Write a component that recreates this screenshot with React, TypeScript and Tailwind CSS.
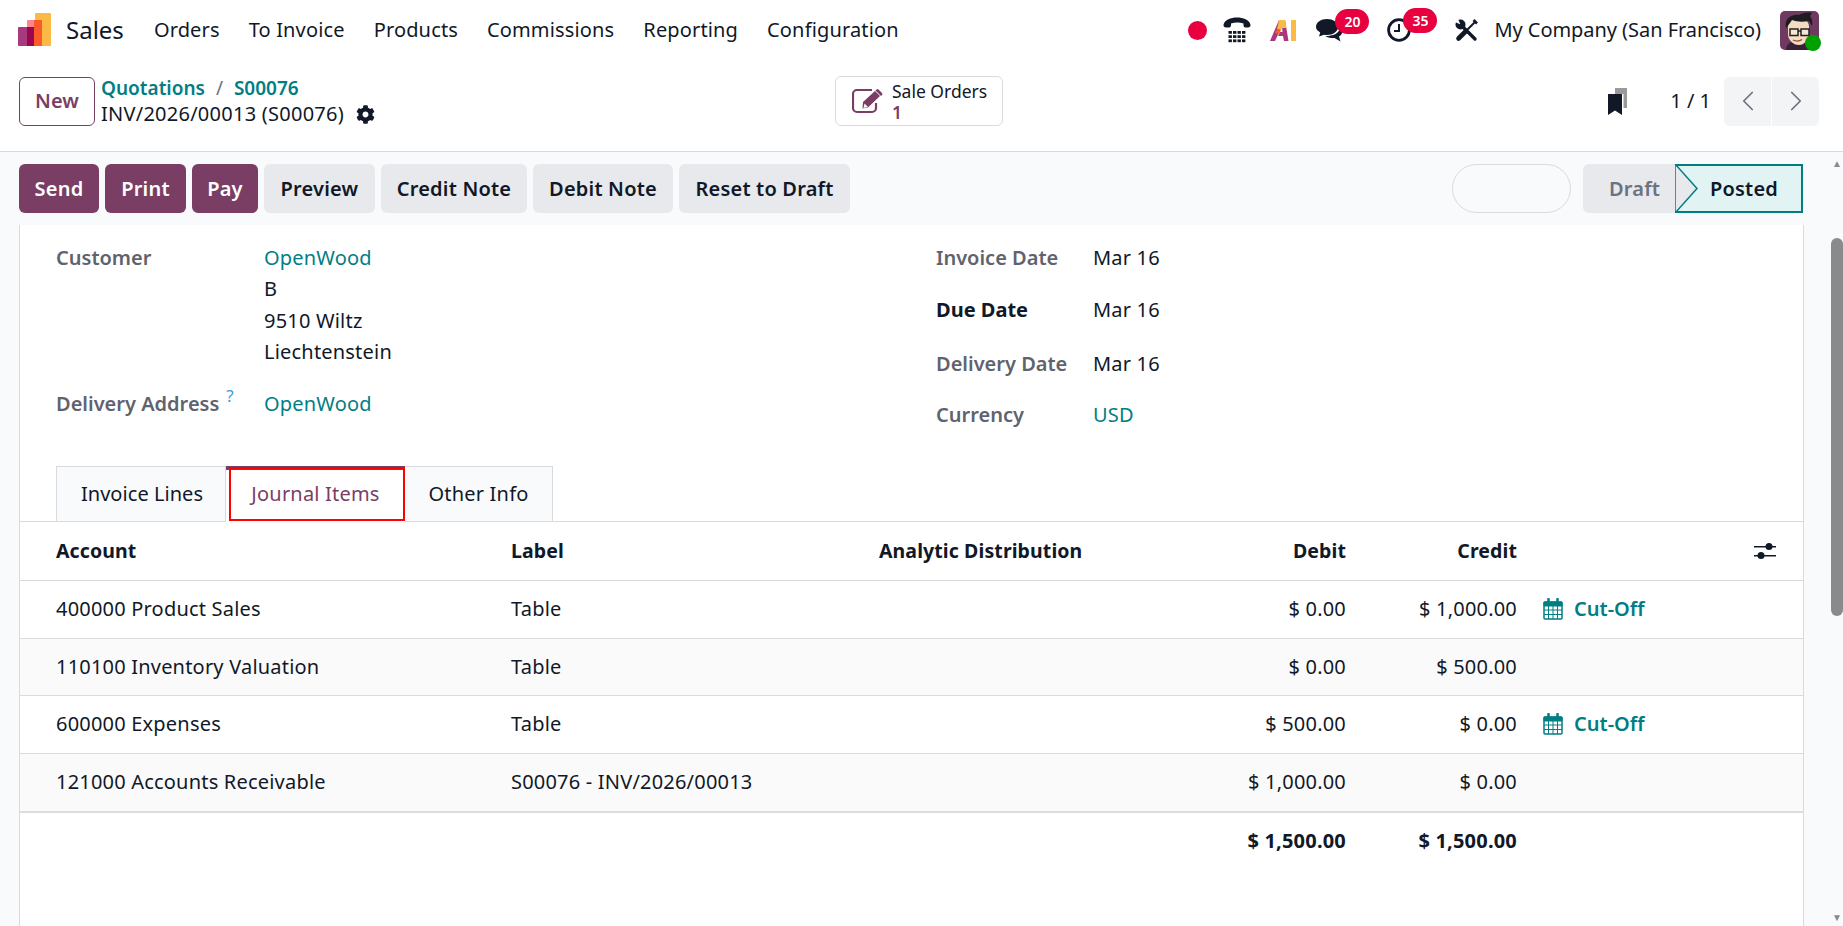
import React from "react";
import { FaCog } from "react-icons/fa";
import { ChevronLeft, ChevronRight } from "lucide-react";

const Logo = () => (
  <svg width="34" height="34" viewBox="0 0 34 34" className="shrink-0">
    <path d="M17 1a1 1 0 0 1 1-1h14a1 1 0 0 1 1 1v31a1 1 0 0 1-1 1H17z" fill="#fbb945" />
    <path d="M9 8a1 1 0 0 1 1-1h14v26H9z" fill="#fc868b" />
    <path d="M16 7h8v26h-8z" fill="#fc5a2b" />
    <path d="M0 15a1 1 0 0 1 1-1h15v19H1a1 1 0 0 1-1-1z" fill="#a8397f" />
    <path d="M9 14h7v19H9z" fill="#9c0650" />
  </svg>
);

const Phone = () => (
  <svg width="28" height="26" viewBox="0 0 28 26" fill="#111827">
    <path d="M0.500 8C1.500 2.500 8 .5 14 .5s12.500 2 13.500 7.500c.2 1.500-1 2.500-2.500 2.500h-2.500c-1.500 0-2-1-2-2.500V6.500C18 5.700 16 5.400 14 5.400s-4 .3-6 1.100V8c0 1.500-.5 2.500-2 2.500H3C1.500 10.500.3 9.500.5 8z" />
    {[0, 1, 2].map((r) =>
      [0, 1, 2, 3].map((c) => <rect key={`${r}-${c}`} x={5.500 + c * 4.500} y={14 + r * 4.200} width="3.400" height="2.800" />)
    )}
  </svg>
);

const Ai = () => (
  <svg width="27" height="21" viewBox="0 0 27 21">
    <path d="M9 0h6l3.500 21h-4.500l-1-5H8l2-4h2.500L12 6 5 21H0z" fill="#a8397f" />
    <path d="M9 0h6l1.500 8H12l-1 2-4-1z" fill="#fbb945" />
    <path d="M7 9l4 1-2 4-4-1z" fill="#fc5a2b" />
    <rect x="21" y="0" width="5" height="21" fill="#fbb945" />
  </svg>
);

const Chat = () => (
  <svg width="27" height="23" viewBox="0 0 27 23" fill="#111827">
    <path d="M11 0c6 0 11 3 11 8 0 4.500-5 8-11 8-1 0-2-.1-3-.3L3 17.500l1.200-4C2 12 0 10.500 0 8c0-5 5-8 11-8z" />
    <path d="M23.500 9.500c2 1 3 2.500 2.500 4.500-.3 1.500-1.500 2.700-3 3.500l1.500 5-6-3.500c-3 .3-7-.2-9-2 7 0 14-2.500 14-7.500z" />
  </svg>
);

const Clock = () => (
  <svg width="24" height="24" viewBox="0 0 24 24" fill="none" stroke="#111827" strokeWidth="2.800">
    <circle cx="12" cy="12" r="10.400" />
    <path d="M12 6v7H7" strokeWidth="2" />
  </svg>
);

const Tools = () => (
  <svg width="23" height="23" viewBox="0 0 23 23" fill="none" stroke="#111827">
    <circle cx="5.500" cy="5.500" r="5" fill="#111827" stroke="none" />
    <path d="M5.500 5.500L-1 2.500L2.500 -1z" fill="#ffffff" stroke="none" />
    <path d="M6 6l14 14" strokeWidth="3.400" strokeLinecap="round" />
    <path d="M20.500 2.500L12 11" strokeWidth="2" />
    <path d="M18.500 1L22 4.500" strokeWidth="2.600" />
    <path d="M10.500 12.500L3.500 19.500" strokeWidth="4.600" strokeLinecap="round" />
  </svg>
);

const Sliders = () => (
  <svg width="22" height="18" viewBox="0 0 22 18" fill="#111827">
    <rect x="0" y="4" width="22" height="1.500" />
    <rect x="0" y="13" width="22" height="1.500" />
    <circle cx="15" cy="4.500" r="3.500" />
    <circle cx="7" cy="13.500" r="3.500" />
  </svg>
);

const Calendar = () => (
  <svg width="20" height="22" viewBox="0 0 20 22" fill="none" stroke="#017e84">
    <path d="M1 5a1 1 0 0 1 1-1h16a1 1 0 0 1 1 1v15a1 1 0 0 1-1 1H2a1 1 0 0 1-1-1z" strokeWidth="1.500" />
    <path d="M1 4h18v4H1z" fill="#017e84" />
    <path d="M1 12h18M1 16.500h18M5.500 8v13M10 8v13M14.500 8v13" strokeWidth="1" />
    <path d="M5.500 1v5M14.500 1v5" strokeWidth="2.500" strokeLinecap="round" />
  </svg>
);

const Avatar = () => (
  <svg width="39" height="39" viewBox="0 0 39 39">
    <rect width="39" height="39" rx="5" fill="#6e3a5f" />
    <path d="M6 39c0-6 5-9 11-9s13 3 13 9z" fill="#3a1f38" />
    <path d="M8 16c0-7 5-9 10-9s11 2 11 9v7c0 6-5 11-10 11-6 0-11-5-11-11z" fill="#f6dcc0" />
    <path d="M6 17C4 8 11 3 19 4c3-2 9-3 13-2-1 1-1 2-2 3 2 3 3 6 2 10l-3-5c-6 1-12 1-17-1l-2 3z" fill="#1c1c22" />
    <rect x="10" y="18" width="8" height="6.500" fill="#f6e7d6" stroke="#222" strokeWidth="1.500" />
    <rect x="21" y="18" width="8" height="6.500" fill="#f6e7d6" stroke="#222" strokeWidth="1.500" />
    <path d="M18 20h3" stroke="#222" strokeWidth="1.500" />
    <path d="M13 29c3 1.500 6 1.500 9-.5" stroke="#8a4a3a" strokeWidth="1.300" fill="none" />
  </svg>
);

const Bookmarks = () => (
  <svg width="19" height="27" viewBox="0 0 19 27" className="shrink-0">
    <path d="M7 0h12v20H7z" fill="#9a9a9a" />
    <path d="M14 6h1.500v18H14z" fill="#fff" />
    <path d="M0 6h14v21l-7-4.500L0 27z" fill="#111827" />
  </svg>
);

const EditIcon = () => (
  <svg width="32" height="26" viewBox="0 0 32 26" className="shrink-0">
    <path d="M20 2H5a4 4 0 0 0-4 4v14a4 4 0 0 0 4 4h15a4 4 0 0 0 4-4v-5" fill="none" stroke="#7a3e65" strokeWidth="2.200" />
    <path d="M11 14L23 3l5 5-12 11.500-5.500 1z" fill="#7a3e65" />
    <path d="M24.500 1.500a1.500 1.500 0 0 1 2 0l3.500 3.500a1.500 1.500 0 0 1 0 2L29 8l-5.500-5.500z" fill="#7a3e65" />
    <path d="M12.500 15.500l3.500 3.500-4.500 1z" fill="#ffffff" />
  </svg>
);

const btnP = "h-[49px] rounded-md bg-[#7a3e65] text-white font-semibold flex items-center justify-center";
const btnS = "h-[49px] rounded-md bg-[#e7e9ed] text-[#111827] font-semibold flex items-center justify-center";
const rowGrid = "grid grid-cols-[491px_368px_300px_167px_171px_1fr] items-center";

type Row = { a: string; l: string; d: string; c: string; cut: boolean };
const rows: Row[] = [
  { a: "400000 Product Sales", l: "Table", d: "$ 0.00", c: "$ 1,000.00", cut: true },
  { a: "110100 Inventory Valuation", l: "Table", d: "$ 0.00", c: "$ 500.00", cut: false },
  { a: "600000 Expenses", l: "Table", d: "$ 500.00", c: "$ 0.00", cut: true },
  { a: "121000 Accounts Receivable", l: "S00076 - INV/2026/00013", d: "$ 1,000.00", c: "$ 0.00", cut: false },
];

const label = "font-semibold text-[#5f636e] tracking-normal";
const badge = "absolute -top-[10px] w-[34px] h-[25px] rounded-full bg-[#e8003f] text-white text-[14px] font-semibold tracking-normal flex items-center justify-center";

export default function App() {
  return (
    <div className="h-[926px] w-[1843px] overflow-hidden flex flex-col bg-white text-[#111827] text-[20px] tracking-[0.2px] font-['Noto_Sans',sans-serif]">
      {/* navbar */}
      <div className="h-[60px] shrink-0 flex items-center pl-[18px] pr-[24px]">
        <Logo />
        <span className="ml-[14px] text-[24px] tracking-normal">Sales</span>
        <nav className="ml-[30px] flex gap-[29px] tracking-[0.15px]">
          {["Orders", "To Invoice", "Products", "Commissions", "Reporting", "Configuration"].map((n) => (
            <span key={n}>{n}</span>
          ))}
        </nav>
        <div className="ml-auto flex items-center">
          <span className="w-[19px] h-[19px] rounded-full bg-[#e8003f]" />
          <span className="ml-[16px] flex"><Phone /></span>
          <span className="ml-[19px] flex"><Ai /></span>
          <span className="ml-[19px] relative flex">
            <Chat />
            <span className={`${badge} left-[19px]`}>20</span>
          </span>
          <span className="ml-[44px] relative flex">
            <Clock />
            <span className={`${badge} left-[16px]`}>35</span>
          </span>
          <span className="ml-[44px] flex"><Tools /></span>
          <span className="ml-[16px] tracking-[-0.05px]">My Company (San Francisco)</span>
          <span className="ml-[19px] relative flex">
            <Avatar />
            <span className="absolute -right-[2px] -bottom-[1px] w-[16px] h-[16px] rounded-full bg-[#00a000]" />
          </span>
        </div>
      </div>
      {/* control panel */}
      <div className="h-[92px] shrink-0 border-b border-[#d8dadd] grid grid-cols-[1fr_auto_1fr] items-center pl-[19px] pr-[24px] pb-[9px]">
        <div className="flex items-center">
          <button className="w-[76px] h-[49px] rounded-md border border-[#7a3e65] text-[#7a3e65] font-semibold tracking-normal">New</button>
          <div className="ml-[6px] leading-[26px]">
            <div className="font-semibold text-[#017e84] text-[19px] tracking-normal">
              Quotations <span className="text-[#6b7280] font-normal mx-[6px]">/</span> S00076
            </div>
            <div className="flex items-center gap-[12px] tracking-[0.25px]">
              INV/2026/00013 (S00076) <FaCog className="text-[#111827]" size={19} />
            </div>
          </div>
        </div>
        <div className="w-[168px] h-[50px] rounded-md border border-[#d8dadd] flex items-center pl-[16px] gap-[8px]">
          <EditIcon />
          <div className="leading-[21px] text-[17.500px] tracking-normal pt-[2px]">
            <div>Sale Orders</div>
            <div className="text-[#7a3e65] font-semibold">1</div>
          </div>
        </div>
        <div className="flex items-center justify-end">
          <Bookmarks />
          <span className="ml-[43px] tracking-normal">1 / 1</span>
          <div className="ml-[13px] flex h-[49px] w-[95px] rounded-md bg-[#f3f4f6] text-[#6b7280]">
            <span className="flex-1 flex items-center justify-center border-r border-white"><ChevronLeft size={34} strokeWidth={1.200} /></span>
            <span className="flex-1 flex items-center justify-center"><ChevronRight size={34} strokeWidth={1.200} /></span>
          </div>
        </div>
      </div>
      <div className="flex-1 min-h-0 flex">
        <div className="flex-1 min-w-0 flex flex-col">
          {/* action bar */}
          <div className="h-[73px] shrink-0 bg-[#f9fafb] flex items-center pl-[19px] pr-[28px] gap-[6px]">
            <button className={`${btnP} w-[80px]`}>Send</button>
            <button className={`${btnP} w-[81px]`}>Print</button>
            <button className={`${btnP} w-[66px]`}>Pay</button>
            <button className={`${btnS} w-[111px]`}>Preview</button>
            <button className={`${btnS} w-[146px]`}>Credit Note</button>
            <button className={`${btnS} w-[140px]`}>Debit Note</button>
            <button className={`${btnS} w-[171px]`}>Reset to Draft</button>
            <span className="ml-auto w-[119px] h-[49px] rounded-full border border-[#d8dadd]" />
            <div className="ml-[6px] flex h-[49px] w-[220px]">
              <span className="w-[92px] bg-[#e7e9ed] rounded-l-md font-semibold text-[#6b7280] flex items-center pl-[26px]">Draft</span>
              <span className="relative flex-1 flex items-center pl-[35px] font-semibold bg-[#e1f3f3] border-y-2 border-r-2 border-[#017e84]">
                <svg className="absolute left-0 -top-[2px]" width="24" height="49" viewBox="0 0 24 49">
                  <path d="M0 0L22 24.500L0 49z" fill="#e7e9ed" stroke="#017e84" strokeWidth="1.500" />
                </svg>
                Posted
              </span>
            </div>
          </div>
          {/* body */}
          <div className="flex-1 min-h-0 bg-[#f9fafb]">
            <div className="ml-[19px] w-[1785px] h-full bg-white border-x border-[#d8dadd] flex flex-col">
              <div className="h-[241px] shrink-0 grid grid-cols-[916px_1fr] pt-[17px]">
                <div className="pl-[36px]">
                  <div className="flex">
                    <span className={`w-[208px] leading-[31px] ${label}`}>Customer</span>
                    <div className="leading-[31.400px]">
                      <div className="text-[#017e84]">OpenWood</div>
                      <div>B</div>
                      <div>9510 Wiltz</div>
                      <div>Liechtenstein</div>
                    </div>
                  </div>
                  <div className="flex mt-[20px] leading-[31px]">
                    <span className={`w-[208px] ${label}`}>
                      Delivery Address<sup className="ml-[7px] text-[#3d9ddb] text-[17px] font-normal leading-none">?</sup>
                    </span>
                    <span className="text-[#017e84]">OpenWood</span>
                  </div>
                </div>
                <div className="flex flex-col leading-[31px]">
                  <div className="flex"><span className={`w-[157px] ${label}`}>Invoice Date</span>Mar 16</div>
                  <div className="flex mt-[21px]"><span className="w-[157px] font-bold tracking-normal">Due Date</span>Mar 16</div>
                  <div className="flex mt-[23px]"><span className={`w-[157px] ${label}`}>Delivery Date</span>Mar 16</div>
                  <div className="flex mt-[20px]"><span className={`w-[157px] ${label}`}>Currency</span><span className="text-[#017e84]">USD</span></div>
                </div>
              </div>
              {/* tabs */}
              <div className="h-[56px] shrink-0 border-b border-[#d8dadd] flex pl-[36px]">
                <span className="w-[170px] h-[56px] bg-[#f9fafb] border border-[#d8dadd] flex items-center justify-center pl-[2px] tracking-[0.05px]">Invoice Lines</span>
                <span className="w-[179px] h-[56px] relative flex items-center justify-center bg-white text-[#7a3e65]">
                  Journal Items
                  <span className="absolute left-0 right-0 top-0 h-[4px] bg-[#7a3e65]" />
                  <span className="absolute left-[3px] right-0 top-[1px] bottom-[1px] border-2 border-[#ff0000]" />
                </span>
                <span className="w-[148px] h-[56px] bg-[#f9fafb] border border-l-0 border-[#d8dadd] flex items-center justify-center">Other Info</span>
              </div>
              {/* table */}
              <div className={`${rowGrid} h-[59px] shrink-0 border-b border-[#d8dadd] font-bold text-[19.500px] tracking-[0.1px]`}>
                <span className="pl-[36px]">Account</span>
                <span>Label</span>
                <span className="whitespace-nowrap">Analytic Distribution</span>
                <span className="text-right">Debit</span>
                <span className="text-right">Credit</span>
                <span className="flex justify-end pr-[27px]"><Sliders /></span>
              </div>
              {rows.map((r, i) => (
                <div key={r.a} className={`${rowGrid} shrink-0 ${i === 3 ? "h-[59px] border-b-2 border-[#dcdde0]" : "h-[57.500px] border-b border-[#d8dadd]"} ${i % 2 === 1 ? "bg-[#fafafa]" : ""}`}>
                  <span className="pl-[36px]">{r.a}</span>
                  <span className="whitespace-nowrap">{r.l}</span>
                  <span />
                  <span className="text-right">{r.d}</span>
                  <span className="text-right">{r.c}</span>
                  {r.cut ? (
                    <span className="pl-[26px] flex items-center gap-[11px] text-[#017e84] font-semibold tracking-normal"><Calendar /> Cut-Off</span>
                  ) : (
                    <span />
                  )}
                </div>
              ))}
              <div className={`${rowGrid} h-[57px] shrink-0 font-bold tracking-[0.2px]`}>
                <span />
                <span />
                <span />
                <span className="text-right">$ 1,500.00</span>
                <span className="text-right">$ 1,500.00</span>
                <span />
              </div>
            </div>
          </div>
        </div>
        {/* scrollbar */}
        <div className="w-[12px] shrink-0 bg-[#f9fafb] flex flex-col items-center">
          <span className="mt-[5px] h-[12px] text-[#8a8a8a] text-[10px] leading-[12px] tracking-normal">▲</span>
          <span className="mt-[69px] w-[12px] h-[378px] rounded-md bg-[#8a8a8a]" />
          <span className="mt-auto mb-[3px] h-[12px] text-[#8a8a8a] text-[10px] leading-[12px] tracking-normal">▼</span>
        </div>
      </div>
    </div>
  );
}
